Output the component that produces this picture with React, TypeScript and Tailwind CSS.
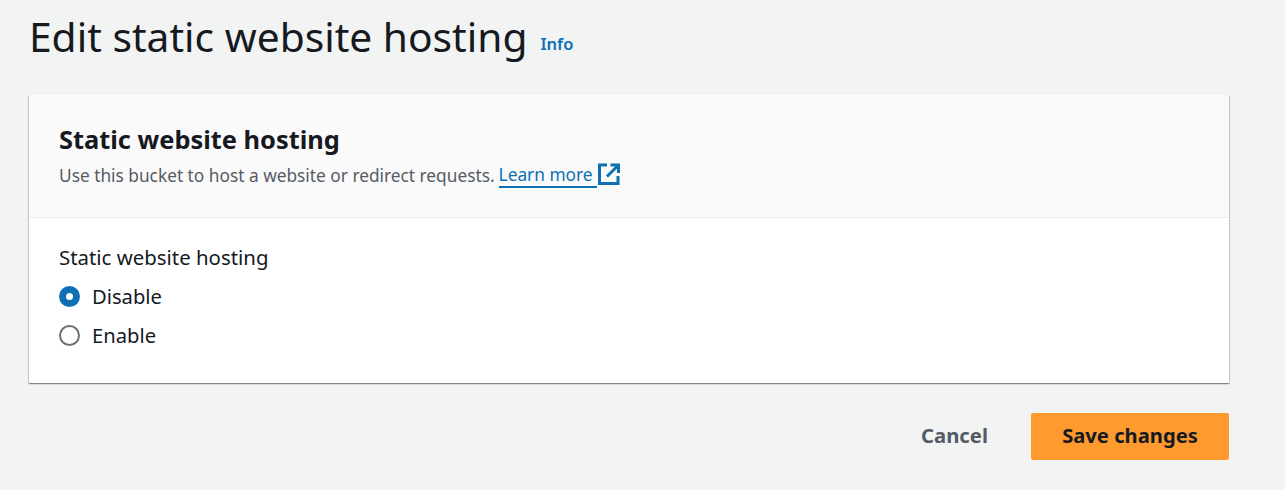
const fontStack = { fontFamily: '"Noto Sans", sans-serif' };

function Radio({ label, checked }: { label: string; checked?: boolean }) {
  return (
    <label className="flex h-[39px] items-center">
      {checked ? (
        <span className="flex h-[21px] w-[21px] items-center justify-center rounded-full bg-[#0f6fb5]">
          <span className="h-[7px] w-[7px] rounded-full bg-white" />
        </span>
      ) : (
        <span className="h-[21px] w-[21px] rounded-full border-2 border-[#687078] bg-white" />
      )}
      <span className="ml-[12px] text-[20.2px] text-[#16191f]">{label}</span>
    </label>
  );
}

export default function App() {
  return (
    <div className="h-[490px] w-[1285px] overflow-hidden bg-[#f2f3f3] pl-[29px] pr-[56px] antialiased" style={fontStack}>
      <div className="flex h-[95px] items-start pt-[8px]">
        <h1 className="text-[40.7px] leading-[56px] font-normal text-[#16191f]">Edit static website hosting</h1>
        <a className="mt-[24px] ml-[13px] text-[16.5px] leading-[24px] font-semibold text-[#0f6fb5]">Info</a>
      </div>

      <section className="h-[288px] bg-white shadow-[0_1px_1px_0_rgba(0,28,36,0.3),1px_1px_1px_0_rgba(0,28,36,0.15),-1px_1px_1px_0_rgba(0,28,36,0.15)]">
        <header className="h-[123px] border-b border-[#eaeded] bg-[#fafafa] pt-[26px] pl-[30px]">
          <h2 className="text-[25.4px] leading-[36px] font-bold text-[#16191f]">Static website hosting</h2>
          <p className="flex h-[38px] items-center text-[17.3px] text-[#545b64]">
            Use this bucket to host a website or redirect requests.
            <a className="ml-[4px] flex items-center border-b-2 border-[#0f6fb5] pr-[4px] leading-[22px] text-[#0f6fb5]">
              Learn more
            </a>
            <svg width="24" height="24" viewBox="0 0 24 24" fill="none" stroke="#0f6fb5" strokeWidth="3" className="relative top-[-2px]">
              <path d="M10 3H2.5v18.5H21V14" />
              <path d="M10 14.500L21 3.500" />
              <path d="M13.500 3H21.500V11" />
            </svg>
          </p>
        </header>
        <div className="pt-[22px] pl-[30px]">
          <div className="text-[20.4px] leading-[34px] text-[#16191f]">Static website hosting</div>
          <div className="mt-[3px]">
            <Radio label="Disable" checked />
            <Radio label="Enable" />
          </div>
        </div>
      </section>

      <div className="mt-[30px] flex items-center justify-end">
        <button className="mr-[43px] pb-[2px] text-[20.3px] font-bold text-[#545b64]">Cancel</button>
        <button className="h-[47px] w-[198px] rounded-[2px] bg-[#ff9a2e] pb-[2px] text-[20.2px] font-bold text-[#16191f]">Save changes</button>
      </div>
    </div>
  );
}
